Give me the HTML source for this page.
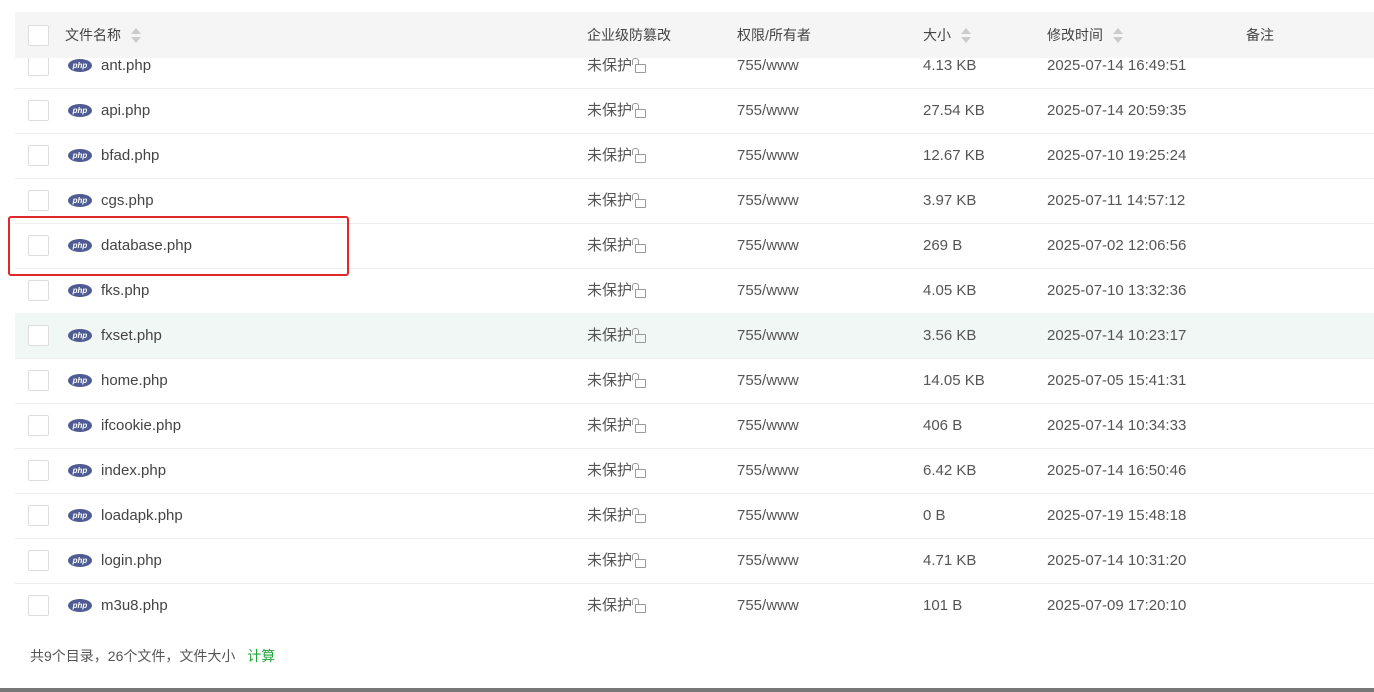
<!DOCTYPE html>
<html><head><meta charset="utf-8"><style>
body{margin:0;width:1374px;height:692px;background:#fff;position:relative;overflow:hidden;font-family:"Liberation Sans","Noto Sans CJK SC",sans-serif;font-size:15px;color:#555}
.row{position:absolute;left:15px;right:0;height:45px;border-bottom:1px solid #eee}
.c{position:absolute;top:0;line-height:45px;white-space:nowrap}
.cb{position:absolute;left:13px;top:12px;width:19px;height:19px;border:1px solid #ddd;border-radius:2px;background:#fff}
.ic{position:absolute;left:53px;top:16px;width:24px;height:13px;border-radius:50%;background:#4f5b93;color:#fff;font-size:8px;font-style:italic;font-weight:bold;line-height:13px;text-align:center}
.hd{position:absolute;left:15px;right:0;top:12px;height:46px;background:#f5f5f5;z-index:2}
.hd .c{line-height:46px;color:#444;font-size:14px}
.sort{display:inline-block;vertical-align:middle;margin-left:10px;width:10px;height:16px;position:relative}
.sort:before{content:"";position:absolute;left:0;top:0;border:5px solid transparent;border-bottom:6px solid #ccc;border-top:0}
.sort:after{content:"";position:absolute;left:0;top:9px;border:5px solid transparent;border-top:6px solid #ccc;border-bottom:0}
.lock{display:inline-block;width:9px;height:7px;border:1px solid #999;border-radius:1px;margin-left:3px;position:relative;top:3px}
.lock:before{content:"";position:absolute;left:-4px;top:-7px;width:5px;height:6px;border:1px solid #999;border-bottom:0;border-radius:3px 3px 0 0}
</style></head><body>
<div class="hd">
<div class="cb" style="top:13px"></div>
<div class="c" style="left:50px">文件名称<span class="sort"></span></div>
<div class="c" style="left:572px">企业级防篡改</div>
<div class="c" style="left:722px">权限/所有者</div>
<div class="c" style="left:908px">大小<span class="sort"></span></div>
<div class="c" style="left:1032px">修改时间<span class="sort"></span></div>
<div class="c" style="left:1231px">备注</div>
</div>
<div id="rows"></div>
<div style="position:absolute;left:8px;top:216px;width:337px;height:56px;border:2px solid #e0282a;border-radius:3px;z-index:3"></div>
<div style="position:absolute;left:30px;top:646px;font-size:14px;color:#555">共9个目录，26个文件，文件大小 <span style="color:#20a53a;margin-left:8px">计算</span></div>
<div style="position:absolute;left:0;right:0;top:688px;height:4px;background:#777"></div>
<script>
var d=[["ant.php","4.13 KB","2025-07-14 16:49:51"],["api.php","27.54 KB","2025-07-14 20:59:35"],["bfad.php","12.67 KB","2025-07-10 19:25:24"],["cgs.php","3.97 KB","2025-07-11 14:57:12"],["database.php","269 B","2025-07-02 12:06:56"],["fks.php","4.05 KB","2025-07-10 13:32:36"],["fxset.php","3.56 KB","2025-07-14 10:23:17"],["home.php","14.05 KB","2025-07-05 15:41:31"],["ifcookie.php","406 B","2025-07-14 10:34:33"],["index.php","6.42 KB","2025-07-14 16:50:46"],["loadapk.php","0 B","2025-07-19 15:48:18"],["login.php","4.71 KB","2025-07-14 10:31:20"],["m3u8.php","101 B","2025-07-09 17:20:10"]];
var h="";d.forEach(function(r,i){var t=43+45*i;h+='<div class="row" style="top:'+t+'px;'+(i==6?'background:#f1f7f5;':'')+(i==12?'border-bottom:0;':'')+'"><div class="cb"></div><div class="ic">php</div><div class="c" style="left:86px;color:#444">'+r[0]+'</div><div class="c" style="left:572px">未保护<span class="lock"></span></div><div class="c" style="left:722px">755/www</div><div class="c" style="left:908px">'+r[1]+'</div><div class="c" style="left:1032px">'+r[2]+'</div></div>';});
document.getElementById("rows").innerHTML=h;
</script>
</body></html>
